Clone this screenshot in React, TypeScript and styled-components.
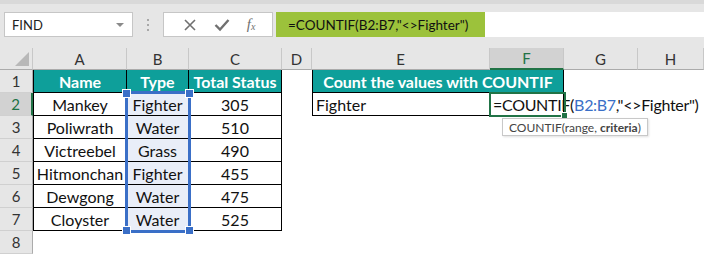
import styled, { createGlobalStyle } from "styled-components";

const GlobalStyle = createGlobalStyle`
  html, body {
    margin: 0;
    padding: 0;
    background: #fff;
  }
  body {
    width: 704px;
    height: 254px;
    overflow: hidden;
    font-family: Lato, "Open Sans", sans-serif;
  }
`;

const COLS = ["A", "B", "C", "D", "E", "F", "G", "H"];
const WIDTHS = [33, 94, 62, 93, 30, 178, 74, 74, 66];
const ROW_H = 23;

const POKEMON = [
  ["Mankey", "Fighter", "305"],
  ["Poliwrath", "Water", "510"],
  ["Victreebel", "Grass", "490"],
  ["Hitmonchan", "Fighter", "455"],
  ["Dewgong", "Water", "475"],
  ["Cloyster", "Water", "525"]
];

export default function App() {
  return (
    <>
      <GlobalStyle />
      <Window>
        <TopStrip />
        <Toolbar>
          <NameBox>
            FIND
            <Caret />
          </NameBox>
          <Grip>
            <i />
            <i />
            <i />
          </Grip>
          <FxBox>
            <svg width="14" height="14" viewBox="0 0 14 14">
              <path d="M2 2 L12 12 M12 2 L2 12" stroke="#707070" strokeWidth="1.6" />
            </svg>
            <svg width="16" height="14" viewBox="0 0 16 14">
              <path d="M1.5 7 L6 11.5 L14.5 2" stroke="#707070" strokeWidth="2.4" fill="none" />
            </svg>
            <FxLabel>
              f<sub>x</sub>
            </FxLabel>
          </FxBox>
          <FormulaInput>
            <FormulaHighlight>=COUNTIF(B2:B7,"&lt;&gt;Fighter")</FormulaHighlight>
          </FormulaInput>
        </Toolbar>

        <Sheet>
          <Corner />
          {COLS.map((c) => (
            <ColHead key={c} $active={c === "F"}>
              {c}
            </ColHead>
          ))}

          {/* row 1 */}
          <RowHead>1</RowHead>
          <Cell $teal $bold $left $right $bottom>Name</Cell>
          <Cell $teal $bold $right $bottom>Type</Cell>
          <Cell $teal $bold $right $bottom>Total Status</Cell>
          <Cell />
          <Cell $teal $bold $left $right $bottom $span={2}>
            Count the values with COUNTIF
          </Cell>
          <Cell />
          <Cell />

          {POKEMON.map((row, i) => (
            <Row key={row[0]} index={i} row={row} />
          ))}

          <RowHead>8</RowHead>
          {COLS.map((c) => (
            <Cell key={c} />
          ))}
        </Sheet>
      </Window>
    </>
  );
}

function Row({ index, row }: { index: number; row: string[] }) {
  const first = index === 0;
  return (
    <>
      <RowHead $active={first}>{index + 2}</RowHead>
      <Cell $left $right $bottom>{row[0]}</Cell>
      <Cell $right $bottom $picked $raised={first}>
        {row[1]}
        {first && (
          <Selection $rows={POKEMON.length}>
            <Handle $pos="tl" />
            <Handle $pos="tr" />
            <Handle $pos="bl" />
            <Handle $pos="br" />
          </Selection>
        )}
      </Cell>
      <Cell $right $bottom>{row[2]}</Cell>
      <Cell />
      {first ? (
        <>
          <Cell $left $bottom $align="left">Fighter</Cell>
          <Cell $right $bottom $align="left" $raised $tight>
            =COUNTIF(<Ref>B2:B7</Ref>,"&lt;&gt;Fighter")<Cursor />
            <ActiveCell>
              <FillHandle />
              <Tip>
                COUNTIF(range, <b>criteria</b>)
              </Tip>
            </ActiveCell>
          </Cell>
        </>
      ) : (
        <>
          <Cell />
          <Cell />
        </>
      )}
      <Cell />
      <Cell />
    </>
  );
}

const Window = styled.div`
  width: 704px;
  height: 254px;
  display: flex;
  flex-direction: column;
  background: #e6e6e6;
`;

const TopStrip = styled.div`
  height: 4px;
  background: #d9d9d9;
`;

const Toolbar = styled.div`
  height: 44px;
  display: flex;
  align-items: flex-start;
  padding: 8px 0 0 4px;
  box-sizing: border-box;
`;

const NameBox = styled.div`
  width: 129px;
  height: 25px;
  box-sizing: border-box;
  background: #fff;
  border: 1px solid #c6c6c6;
  display: flex;
  align-items: center;
  justify-content: space-between;
  padding: 0 8px 0 7px;
  font-size: 13px;
  color: #222;
`;

const Caret = styled.span`
  width: 0;
  height: 0;
  border-left: 4px solid transparent;
  border-right: 4px solid transparent;
  border-top: 4px solid #8a8a8a;
`;

const Grip = styled.div`
  width: 30px;
  height: 25px;
  display: flex;
  flex-direction: column;
  align-items: center;
  justify-content: center;
  gap: 3px;

  i {
    width: 2px;
    height: 2px;
    background: #a8a8a8;
  }
`;

const FxBox = styled.div`
  width: 110px;
  height: 25px;
  box-sizing: border-box;
  background: #fff;
  border: 1px solid #c6c6c6;
  display: flex;
  align-items: center;
  justify-content: space-around;
  padding: 0 8px 0 10px;
`;

const FxLabel = styled.span`
  font-family: "Liberation Serif", serif;
  font-style: italic;
  font-size: 15px;
  color: #707070;

  sub {
    font-size: 10px;
    vertical-align: -1px;
  }
`;

const FormulaInput = styled.div`
  flex: 1;
  height: 25px;
  margin-left: 3px;
  background: #fff;
  display: flex;
`;

const FormulaHighlight = styled.div`
  width: 209px;
  background: #9cc23b;
  box-sizing: border-box;
  padding: 0 0 0 12px;
  display: flex;
  align-items: center;
  font-size: 13.5px;
  color: #111;
  white-space: nowrap;
`;

const Sheet = styled.div`
  flex: 1;
  display: grid;
  grid-template-columns: ${WIDTHS.map((w) => w + "px").join(" ")};
  grid-template-rows: 22px repeat(8, ${ROW_H}px);
  background: #fff;
`;

const Corner = styled.div`
  background: #e6e6e6;
  border-right: 1px solid #c8c8c8;
  border-bottom: 1px solid #ababab;
  position: relative;

  &::after {
    content: "";
    position: absolute;
    right: 3px;
    bottom: 3px;
    border-left: 14px solid transparent;
    border-bottom: 14px solid #b8b8b8;
  }
`;

const ColHead = styled.div<{ $active?: boolean }>`
  display: flex;
  align-items: center;
  justify-content: center;
  font-size: 15px;
  color: ${(p) => (p.$active ? "#217346" : "#333")};
  background: ${(p) => (p.$active ? "#d2d2d2" : "#e6e6e6")};
  border-right: 1px solid #c8c8c8;
  border-bottom: ${(p) => (p.$active ? "2px solid #217346" : "1px solid #ababab")};
  box-sizing: border-box;
`;

const RowHead = styled.div<{ $active?: boolean }>`
  display: flex;
  align-items: center;
  justify-content: center;
  font-size: 15px;
  color: ${(p) => (p.$active ? "#217346" : "#333")};
  background: ${(p) => (p.$active ? "#d2d2d2" : "#e6e6e6")};
  border-right: ${(p) => (p.$active ? "2px solid #217346" : "1px solid #ababab")};
  border-bottom: 1px solid #d0d0d0;
  box-sizing: border-box;
`;

const Cell = styled.div<{
  $teal?: boolean;
  $bold?: boolean;
  $left?: boolean;
  $right?: boolean;
  $bottom?: boolean;
  $picked?: boolean;
  $span?: number;
  $align?: "left" | "center";
  $raised?: boolean;
  $tight?: boolean;
}>`
  grid-column: span ${(p) => p.$span ?? 1};
  box-sizing: border-box;
  display: flex;
  align-items: center;
  justify-content: ${(p) => (p.$align === "left" ? "flex-start" : "center")};
  padding: ${(p) => (p.$align === "left" ? "1px 0 0 3px" : "1px 0 0")};
  font-size: 16px;
  letter-spacing: ${(p) => (p.$tight ? "-0.3px" : "normal")};
  font-weight: ${(p) => (p.$bold ? 700 : 400)};
  color: ${(p) => (p.$teal ? "#fff" : "#111")};
  background: ${(p) => (p.$teal ? "#0e9f9a" : p.$picked ? "#e9eef8" : "#fff")};
  border-left: ${(p) => (p.$left ? "1px solid #000" : "none")};
  border-right: ${(p) => (p.$right ? "1px solid #000" : "none")};
  border-bottom: ${(p) => (p.$bottom ? "1px solid #000" : "none")};
  white-space: nowrap;
  position: relative;
  z-index: ${(p) => (p.$raised ? 3 : 0)};
`;

const Ref = styled.span`
  color: #3a6fc7;
`;

const Cursor = styled.span`
  display: inline-block;
  width: 1px;
  height: 17px;
  margin-left: -2px;
  background: #000;
`;

const Selection = styled.div<{ $rows: number }>`
  position: absolute;
  top: -2px;
  left: -2px;
  width: 66px;
  height: ${(p) => p.$rows * ROW_H + 4}px;
  box-sizing: border-box;
  border: 3px solid #3a6fc7;
  pointer-events: none;
`;

const Handle = styled.span<{ $pos: "tl" | "tr" | "bl" | "br" }>`
  position: absolute;
  width: 7px;
  height: 7px;
  background: #3a6fc7;
  border: 1px solid #fff;
  ${(p) => (p.$pos[0] === "t" ? "top: -5px;" : "bottom: -5px;")}
  ${(p) => (p.$pos[1] === "l" ? "left: -6px;" : "right: -6px;")}
`;

const ActiveCell = styled.div`
  position: absolute;
  top: -1px;
  left: -1px;
  width: 77px;
  height: 25px;
  box-sizing: border-box;
  border: 2px solid #217346;
  pointer-events: none;
`;

const FillHandle = styled.span`
  position: absolute;
  right: -4px;
  bottom: -4px;
  width: 5px;
  height: 5px;
  background: #217346;
  border: 1px solid #fff;
`;

const Tip = styled.div`
  position: absolute;
  top: 24px;
  left: 11px;
  width: 146px;
  height: 18px;
  box-sizing: border-box;
  background: #fff;
  border: 1px solid #c8c8c8;
  box-shadow: 1px 1px 2px rgba(0, 0, 0, 0.12);
  display: flex;
  align-items: center;
  padding-left: 6px;
  font-size: 12px;
  font-weight: 400;
  letter-spacing: normal;
  color: #444;
  white-space: nowrap;

  b {
    font-weight: 700;
    margin-left: 3px;
  }
`;
